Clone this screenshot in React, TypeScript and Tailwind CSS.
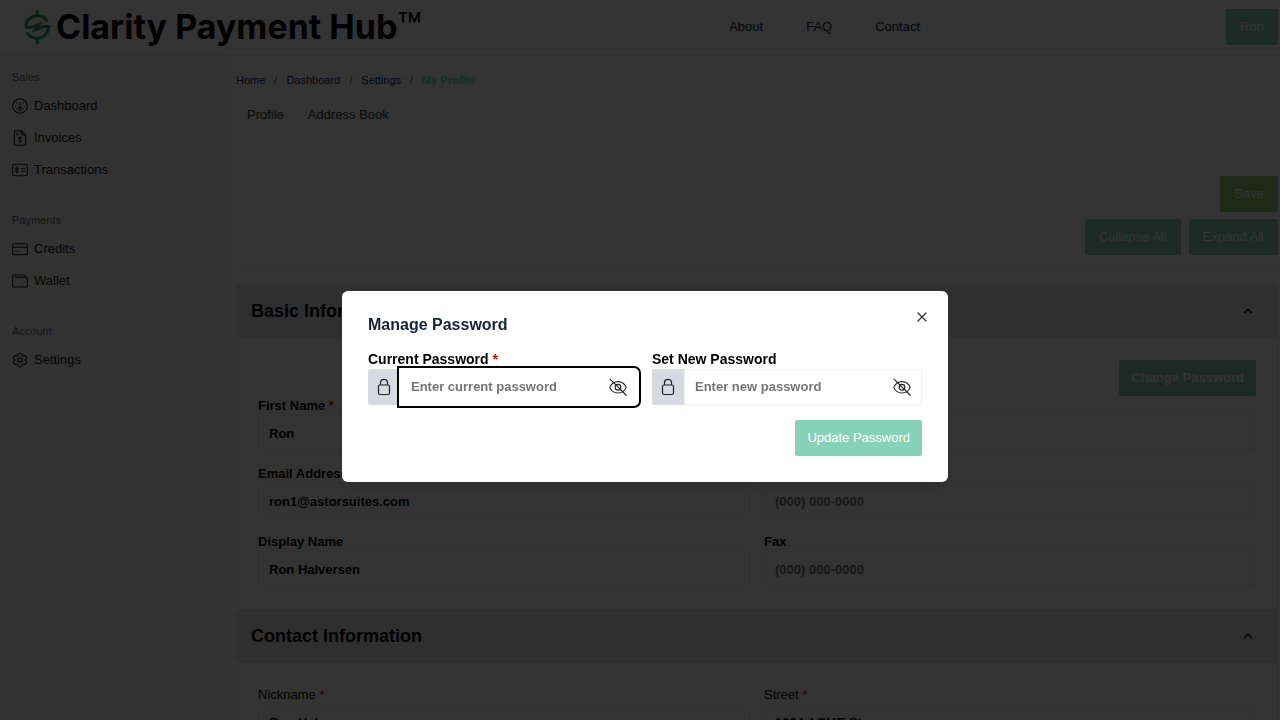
import type { ReactNode } from "react";
import { ChevronUp, X } from "lucide-react";
import { HiOutlineCog6Tooth } from "react-icons/hi2";

type IconProps = { children: ReactNode };

function LineIcon({ children }: IconProps) {
  return (
    <svg
      width="16"
      height="16"
      viewBox="0 0 24 24"
      fill="none"
      stroke="currentColor"
      strokeWidth="1.6"
      strokeLinecap="round"
      strokeLinejoin="round"
      aria-hidden="true"
    >
      {children}
    </svg>
  );
}

const dashboardIcon = (
  <LineIcon>
    <circle cx="12" cy="12" r="10.8" />
    <path d="M12 6v8" />
    <circle cx="12" cy="16.3" r="2.2" />
    <path d="M4.8 12h.6M18.6 12h.6M6.8 7l.5.5M17.2 7l-.5.5M6.5 16.5l.4-.3M17.5 16.5l-.4-.3" />
  </LineIcon>
);

const invoiceIcon = (
  <LineIcon>
    <path d="M14 1H5.500a2 2 0 0 0-2 2v18a2 2 0 0 0 2 2h13a2 2 0 0 0 2-2V7.500L14 1Z" />
    <path d="M14 1v5a1.500 1.500 0 0 0 1.500 1.500h5M6.500 4.500h3M6.500 7.500h2" />
    <path d="M14.400 12.200c-.5-.8-1.300-1.100-2.300-1.100-1.300 0-2.300.6-2.300 1.700 0 2.400 4.700 1 4.700 3.500 0 1.100-1.100 1.700-2.400 1.700-1.100 0-2-.4-2.500-1.200M12.100 9.800v1.300M12.100 18v1.300" />
  </LineIcon>
);

const transactionsIcon = (
  <LineIcon>
    <rect x="1" y="3.500" width="22" height="17" rx="2" />
    <path d="M9.300 9.700c-.4-.6-1-.9-1.900-.9-1.100 0-1.900.5-1.900 1.400 0 2 3.900.9 3.900 3 0 .9-.9 1.500-2 1.500-.9 0-1.600-.3-2-1M7.400 7.500v1.300M7.400 14.700V16M14 10h5M14 14h5" />
  </LineIcon>
);

const creditsIcon = (
  <LineIcon>
    <rect x="1" y="4" width="22" height="16.500" rx="2" />
    <path d="M1 9.500h22M5.500 15.500h1M9.500 15.500h1" />
  </LineIcon>
);

const walletIcon = (
  <LineIcon>
    <path d="M20.500 6.500V5a2 2 0 0 0-2-2H3.500A2.500 2.500 0 0 0 1 5.500v13A2.500 2.500 0 0 0 3.500 21h17a2.500 2.500 0 0 0 2.500-2.500V9a2.500 2.500 0 0 0-2.500-2.500H5" />
    <path d="M17.800 13.500h.4" />
  </LineIcon>
);

const navSections = [
  {
    title: "Sales",
    items: [
      { label: "Dashboard", icon: dashboardIcon },
      { label: "Invoices", icon: invoiceIcon },
      { label: "Transactions", icon: transactionsIcon },
    ],
  },
  {
    title: "Payments",
    items: [
      { label: "Credits", icon: creditsIcon },
      { label: "Wallet", icon: walletIcon },
    ],
  },
  {
    title: "Account",
    items: [
      { label: "Settings", icon: <HiOutlineCog6Tooth size={18} className="-mx-px" /> },
    ],
  },
];

const basicFields = [
  { id: "first-name", label: "First Name", required: true, value: "Ron" },
  { id: "last-name", label: "Last Name", required: true, value: "" },
  { id: "email", label: "Email Address", required: true, value: "ron1@astorsuites.com" },
  { id: "phone", label: "Phone", placeholder: "(000) 000-0000" },
  { id: "display-name", label: "Display Name", value: "Ron Halversen" },
  { id: "fax", label: "Fax", placeholder: "(000) 000-0000" },
];

const contactFields = [
  { id: "nickname", label: "Nickname", required: true, value: "Ron Halversen" },
  { id: "street", label: "Street", required: true, value: "1234 ACME St." },
];

type FieldProps = {
  id: string;
  label: string;
  required?: boolean;
  value?: string;
  placeholder?: string;
  light?: boolean;
};

function Field({ id, label, required, value, placeholder, light }: FieldProps) {
  return (
    <div>
      <label
        htmlFor={id}
        className={`block text-[13px] leading-[19px] text-black ${light ? "font-normal" : "font-bold"}`}
      >
        {label} {required && <span className="text-red-600">*</span>}
      </label>
      <input
        id={id}
        defaultValue={value}
        placeholder={placeholder}
        className="block h-9 w-full rounded-xs border border-[#f3f3f6] px-2.5 text-[13px] font-bold text-black placeholder:text-[#757575]"
      />
    </div>
  );
}

function Section({ title, children }: { title: string; children: ReactNode }) {
  return (
    <section className="border-x border-[#f3f3f6]">
      <button
        type="button"
        className="flex h-[54px] w-full items-center justify-between bg-[#e9e9eb] pr-[22px] pl-3.5 text-black"
      >
        <span className="text-lg font-bold">{title}</span>
        <ChevronUp size={14} strokeWidth={2.5} />
      </button>
      <div className="px-[21px] py-[22px]">{children}</div>
    </section>
  );
}

function Logo() {
  return (
    <a href="#" className="flex items-center gap-1 text-black">
      <svg width="30" height="36" viewBox="0 0 30 36" fill="none" aria-hidden="true">
        <defs>
          <linearGradient id="mark" x1="4" y1="4" x2="24" y2="32" gradientUnits="userSpaceOnUse">
            <stop stopColor="#3a9a3c" />
            <stop offset="1" stopColor="#2a9f8c" />
          </linearGradient>
        </defs>
        <g stroke="url(#mark)" strokeWidth="3">
          <path d="M25.500 12.500C23.500 9 19.800 6.800 15.300 6.800 9 6.800 4 11.300 4 16.500c0 1.500.7 2 2.300 2H9l8-3-3.500 5 8-3h5.200c0 6.500-5 11.700-11.400 11.700-4.500 0-8.300-2.200-10.300-5.800" />
          <path d="M15.300 1v5.500M15.300 29v6" />
        </g>
      </svg>
      <span className="flex items-start font-['Inter',sans-serif] text-[34px] leading-10 font-bold">
        Clarity Payment Hub
        <span className="text-[40px] font-normal">™</span>
      </span>
    </a>
  );
}

function EyeSlash() {
  return (
    <svg
      width="18"
      height="18"
      viewBox="0 0 24 24"
      fill="none"
      stroke="currentColor"
      strokeWidth="1.500"
      strokeLinecap="round"
      aria-hidden="true"
    >
      <path d="M1 12.500C3 8 7 4.800 12 4.800S21 8 23 12.500C21 17 17 20 12 20S3 17 1 12.500Z" />
      <circle cx="12" cy="12.300" r="3.800" />
      <path d="M1.500 1.500 23 23" />
    </svg>
  );
}

type PasswordFieldProps = {
  id: string;
  label: string;
  placeholder: string;
  required?: boolean;
  focused?: boolean;
};

function PasswordField({ id, label, placeholder, required, focused }: PasswordFieldProps) {
  return (
    <div>
      <label htmlFor={id} className="block text-sm leading-5 font-bold text-black">
        {label} {required && <span className="text-red-600">*</span>}
      </label>
      <div className="flex h-9 text-[#222]">
        <span className="flex w-8 shrink-0 items-center justify-center rounded-l-xs bg-[#d8d9e3]">
          <svg
            width="14"
            height="18"
            viewBox="0 0 14 18"
            fill="none"
            stroke="currentColor"
            strokeWidth="1.200"
            aria-hidden="true"
          >
            <rect x="1.500" y="7" width="11" height="9.500" rx="1.500" />
            <path d="M3.500 7V4.800a3.500 3.500 0 0 1 7 0V7" />
          </svg>
        </span>
        <div
          className={`flex min-w-0 flex-1 items-center border bg-white px-2.5 ${
            focused
              ? "relative z-10 rounded-r-sm border-white ring-2 ring-black ring-offset-1 ring-offset-white"
              : "border-[#f1f1f5]"
          }`}
        >
          <input
            id={id}
            type="password"
            placeholder={placeholder}
            className="min-w-0 flex-1 bg-transparent text-[13px] font-bold outline-none placeholder:text-[#757575]"
          />
          <button type="button" aria-label="Show password">
            <EyeSlash />
          </button>
        </div>
      </div>
    </div>
  );
}

function PasswordModal() {
  return (
    <div className="fixed inset-0 z-20 flex items-center justify-center bg-black/80 pt-[53px] pl-2.5">
      <div
        role="dialog"
        aria-labelledby="password-title"
        className="relative w-full max-w-[606px] rounded-md bg-white p-[26px] shadow-lg"
      >
        <h2 id="password-title" className="text-base leading-4 font-bold text-[#16213a]">
          Manage Password
        </h2>
        <button
          type="button"
          aria-label="Close"
          className="absolute top-[18px] right-[18px] text-[#333]"
        >
          <X size={16} strokeWidth={1.8} />
        </button>

        <form>
          <div className="mt-4 grid grid-cols-2 gap-3.5">
            <PasswordField
              id="current-password"
              label="Current Password"
              placeholder="Enter current password"
              required
              focused
            />
            <PasswordField
              id="new-password"
              label="Set New Password"
              placeholder="Enter new password"
            />
          </div>
          <div className="mt-[15px] flex justify-end">
            <button
              type="button"
              className="h-9 rounded-xs bg-[#88d1b9] px-3 text-[13px] text-white"
            >
              Update Password
            </button>
          </div>
        </form>
      </div>
    </div>
  );
}

export default function App() {
  return (
    <div className="flex h-screen flex-col overflow-hidden bg-white font-['Liberation_Sans',sans-serif]">
      {/* Header */}
      <header className="flex h-[55px] shrink-0 items-center border-b border-[#e8e8ec] pr-0.5 pl-[22px]">
        <div className="flex-1">
          <Logo />
        </div>
        <nav className="flex gap-[43px] text-[13px] text-[#16213a]">
          <a href="#">About</a>
          <a href="#">FAQ</a>
          <a href="#">Contact</a>
        </nav>
        <div className="flex w-[358px] justify-end">
          <button
            type="button"
            className="h-9 rounded-xs bg-[#88d1b9] px-3.5 text-[13px] text-white"
          >
            Ron
          </button>
        </div>
      </header>

      <div className="flex min-h-0 flex-1">
        {/* Sidebar */}
        <aside className="flex w-[229px] shrink-0 flex-col gap-[26px] border-r border-[#f7f7f9] bg-[#fafafa] pt-3.5 pl-3">
          {navSections.map((section) => (
            <nav key={section.title} aria-label={section.title}>
              <h3 className="mb-[5px] text-[11px] leading-4 text-[#6b6b6b]">
                {section.title}
              </h3>
              {section.items.map((item) => (
                <a
                  key={item.label}
                  href="#"
                  className="flex h-8 items-center gap-1.5 text-[13px] text-[#111]"
                >
                  {item.icon}
                  {item.label}
                </a>
              ))}
            </nav>
          ))}
        </aside>

        {/* Profile page */}
        <main className="min-w-0 flex-1 pt-[17px] pr-0.5 pl-[7px]">
          <nav className="flex gap-[9px] text-[11px] leading-4 text-[#141e5a]">
            <a href="#">Home</a>
            <span className="text-[#555]">/</span>
            <a href="#">Dashboard</a>
            <span className="text-[#555]">/</span>
            <a href="#">Settings</a>
            <span className="text-[#555]">/</span>
            <span className="font-bold text-[#88d1b9]">My Profile</span>
          </nav>

          <nav className="mt-[17px] flex gap-6 px-[11px] text-[13px] leading-5 text-[#333]">
            <a href="#">Profile</a>
            <a href="#">Address Book</a>
          </nav>

          <div className="mt-[51px] flex flex-col items-end gap-[7px] border-b border-[#f0f0f5] pb-3.5 text-[13px] text-white">
            <button type="button" className="h-9 rounded-xs bg-[#98d06c] px-3.5">
              Save
            </button>
            <div className="flex gap-2">
              <button type="button" className="h-9 rounded-xs bg-[#88d1b9] px-3.5">
                Collapse All
              </button>
              <button type="button" className="h-9 rounded-xs bg-[#88d1b9] px-3.5">
                Expand All
              </button>
            </div>
          </div>

          <div className="mt-3.5">
            <Section title="Basic Information">
              <div className="flex justify-end">
                <button
                  type="button"
                  className="h-9 rounded-xs bg-[#88d1b9] px-3 text-[13px] font-bold text-white"
                >
                  Change Password
                </button>
              </div>
              <div className="grid grid-cols-2 gap-x-3.5 gap-y-[13px]">
                {basicFields.map((field) => (
                  <Field key={field.id} {...field} />
                ))}
              </div>
            </Section>

            <Section title="Contact Information">
              <div className="grid grid-cols-2 gap-x-3.5 gap-y-[13px]">
                {contactFields.map((field) => (
                  <Field key={field.id} {...field} light />
                ))}
              </div>
            </Section>
          </div>
        </main>
      </div>

      <PasswordModal />
    </div>
  );
}
